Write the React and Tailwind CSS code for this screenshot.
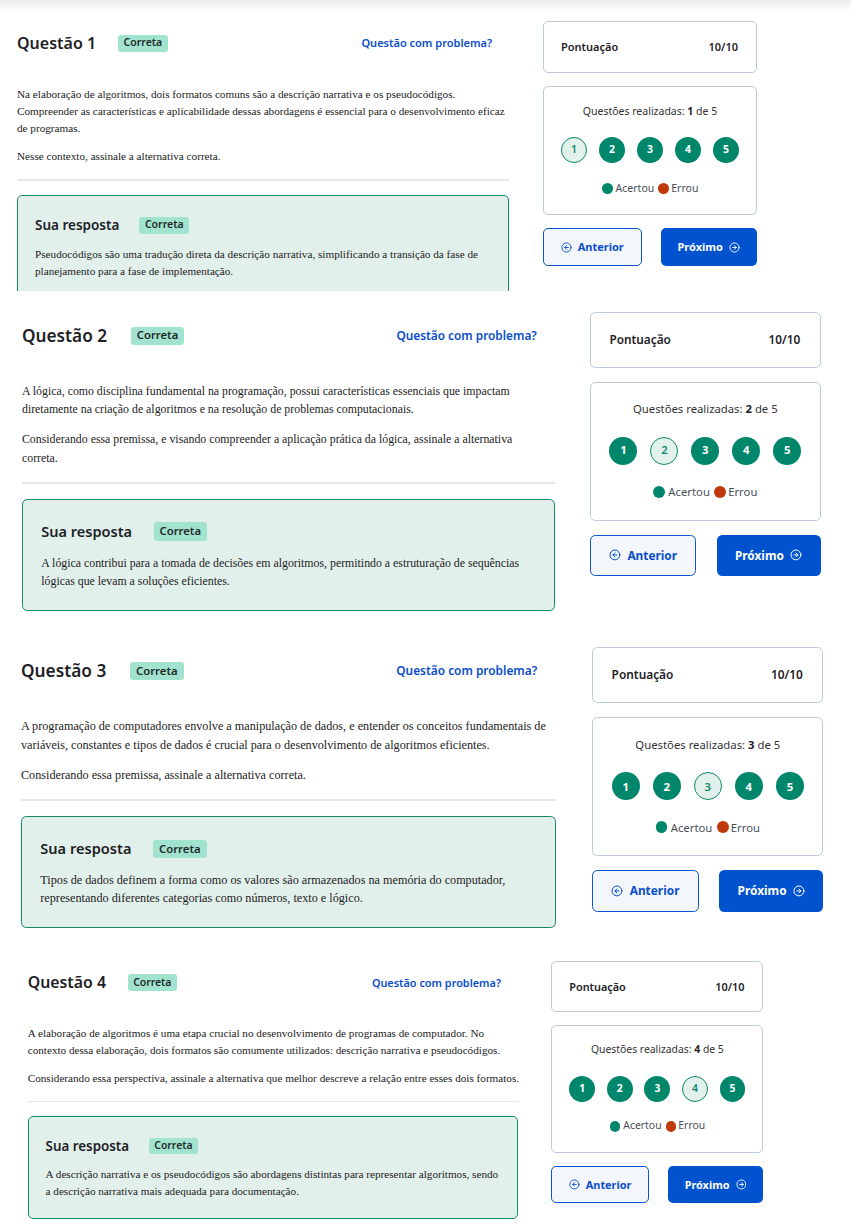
// Quiz review page: four screenshots of the question review panel stacked.

import { CircleArrowLeft, CircleArrowRight } from 'lucide-react';

const sans = "font-['Noto_Sans',sans-serif]";
const serif = "font-['Liberation_Serif',serif]";

const questions = [
  {
    num: 1,
    wrap: 'h-[291px] bg-[linear-gradient(to_bottom,#ededed,#ffffff_12px)]',
    inner: '[zoom:1] pt-[21px] pl-[17px] gap-[34px]',
    leftW: 'w-[492px]',
    text: 'text-[11.2px]',
    para1: [
      'Na elaboração de algoritmos, dois formatos comuns são a descrição narrativa e os pseudocódigos.',
      'Compreender as características e aplicabilidade dessas abordagens é essencial para o desenvolvimento eficaz',
      'de programas.',
    ],
    para2: ['Nesse contexto, assinale a alternativa correta.'],
    answer: [
      'Pseudocódigos são uma tradução direta da descrição narrativa, simplificando a transição da fase de',
      'planejamento para a fase de implementação.',
    ],
  },
  {
    num: 2,
    wrap: 'h-[339px]',
    inner: '[zoom:1.077] pt-[19.5px] pl-[20.4px] gap-[32.5px]',
    leftW: 'w-[495px]',
    text: 'text-[11px]',
    para1: [
      'A lógica, como disciplina fundamental na programação, possui características essenciais que impactam',
      'diretamente na criação de algoritmos e na resolução de problemas computacionais.',
    ],
    para2: [
      'Considerando essa premissa, e visando compreender a aplicação prática da lógica, assinale a alternativa',
      'correta.',
    ],
    answer: [
      'A lógica contribui para a tomada de decisões em algoritmos, permitindo a estruturação de sequências',
      'lógicas que levam a soluções eficientes.',
    ],
  },
  {
    num: 3,
    wrap: 'h-[310px]',
    inner: '[zoom:1.08] pt-[15.7px] pl-[19.4px] gap-[34px]',
    leftW: 'w-[495px]',
    text: 'text-[11.3px]',
    para1: [
      'A programação de computadores envolve a manipulação de dados, e entender os conceitos fundamentais de',
      'variáveis, constantes e tipos de dados é crucial para o desenvolvimento de algoritmos eficientes.',
    ],
    para2: ['Considerando essa premissa, assinale a alternativa correta.'],
    answer: [
      'Tipos de dados definem a forma como os valores são armazenados na memória do computador,',
      'representando diferentes categorias como números, texto e lógico.',
    ],
  },
  {
    num: 4,
    wrap: 'h-[285px]',
    inner: '[zoom:0.99] pt-[21.2px] pl-[28px] gap-[34px]',
    leftW: 'w-[495px]',
    text: 'text-[11.3px]',
    para1: [
      'A elaboração de algoritmos é uma etapa crucial no desenvolvimento de programas de computador. No',
      'contexto dessa elaboração, dois formatos são comumente utilizados: descrição narrativa e pseudocódigos.',
    ],
    para2: ['Considerando essa perspectiva, assinale a alternativa que melhor descreve a relação entre esses dois formatos.'],
    answer: [
      'A descrição narrativa e os pseudocódigos são abordagens distintas para representar algoritmos, sendo',
      'a descrição narrativa mais adequada para documentação.',
    ],
  },
];

function Badge({ className }) {
  return (
    <span
      className={`${sans} ${className} inline-flex items-center h-[17px] px-[5.5px] rounded-[3px] bg-[#a2e3cf] text-[10.5px] font-semibold text-[#1f2a2a]`}
    >
      Correta
    </span>
  );
}

function Lines({ lines }) {
  return lines.map((l, i) => (
    <span key={i} className="block whitespace-nowrap">
      {l}
    </span>
  ));
}

function Progress({ current }) {
  return (
    <div className="flex items-center justify-center gap-[12px] mt-[19px]">
      {[1, 2, 3, 4, 5].map((n) =>
        n === current ? (
          <span
            key={n}
            className="w-[26px] h-[26px] rounded-full border-[1.5px] border-[#0b8868] bg-[#e3f1ec] text-[#0b8868] flex items-center justify-center text-[10.5px] font-semibold"
          >
            {n}
          </span>
        ) : (
          <span
            key={n}
            className="w-[26px] h-[26px] rounded-full bg-[#00866a] text-white flex items-center justify-center text-[10.5px] font-bold"
          >
            {n}
          </span>
        )
      )}
    </div>
  );
}

function Section({ q }) {
  return (
    <div className={`${q.wrap} overflow-hidden`}>
      <div className={`${q.inner} flex items-start`}>
        {/* left: question + answer */}
        <div className={`${q.leftW} pt-[13px] shrink-0`}>
          <div className={`${sans} flex items-center h-[18px] pr-[17px]`}>
            <h2 className="text-[16px] leading-none font-semibold text-[#1e2226]">Questão {q.num}</h2>
            <Badge className="ml-[22px]" />
            <a className="ml-auto text-[11px] font-semibold text-[#0a4dcc]">Questão com problema?</a>
          </div>

          <div className={`${serif} ${q.text} mt-[34px] leading-[17px] text-[#222]`}>
            <p>
              <Lines lines={q.para1} />
            </p>
            <p className="mt-[11px]">
              <Lines lines={q.para2} />
            </p>
          </div>

          <div className="mt-[14px] h-[1.5px] bg-[#e1e7ee]" />

          <div className="mt-[14px] border-[1.5px] border-[#128a6c] bg-[#e2f0ec] rounded-[5px] pt-[21px] pb-[18px] px-[17px]">
            <div className={`${sans} flex items-center h-[17px]`}>
              <span className="text-[13.5px] font-semibold text-[#1e2226]">Sua resposta</span>
              <Badge className="ml-[20px]" />
            </div>
            <p className={`${serif} ${q.text} mt-[12px] leading-[17px] text-[#222]`}>
              <Lines lines={q.answer} />
            </p>
          </div>
        </div>

        {/* right: score + progress + nav */}
        <div className={`${sans} w-[214px] shrink-0 flex flex-col`}>
          <div className="h-[52px] border-[1.5px] border-[#bccadc] rounded-[5px] flex items-center justify-between pl-[17px] pr-[18px] text-[11px] font-semibold text-[#1e2226]">
            <span>Pontuação</span>
            <span>10/10</span>
          </div>

          <div className="mt-[13px] h-[129px] border-[1.5px] border-[#bccadc] rounded-[5px] pt-[17px]">
            <p className="text-center text-[10.5px] leading-[14px] text-[#333]">
              Questões realizadas: <b className="font-bold text-[#1e2226]">{q.num}</b> de 5
            </p>
            <Progress current={q.num} />
            <div className="mt-[18px] flex items-center justify-center text-[10.5px] leading-[14px] text-[#4a4f57]">
              <span className="w-[11px] h-[11px] rounded-full bg-[#00866a] mr-[3px]" />
              <span>Acertou</span>
              <span className="w-[11px] h-[11px] rounded-full bg-[#c0390b] ml-[4px] mr-[2px]" />
              <span>Errou</span>
            </div>
          </div>

          <div className="mt-[13px] flex gap-[19px]">
            <button className="flex-1 h-[38px] border-[1.5px] border-[#0a55d4] bg-[#f3f6fa] rounded-[5px] flex items-center justify-center gap-[6px] text-[11px] font-bold text-[#0a4dcc]">
              <CircleArrowLeft size={11} strokeWidth={2} />
              Anterior
            </button>
            <button className="flex-1 h-[38px] bg-[#0052cf] rounded-[5px] flex items-center justify-center gap-[6px] text-[11px] font-bold text-white">
              Próximo
              <CircleArrowRight size={11} strokeWidth={2} />
            </button>
          </div>
        </div>
      </div>
    </div>
  );
}

export default function App() {
  return (
    <div className="w-[851px] min-h-[1225px] bg-white">
      {questions.map((q) => (
        <Section key={q.num} q={q} />
      ))}
    </div>
  );
}
